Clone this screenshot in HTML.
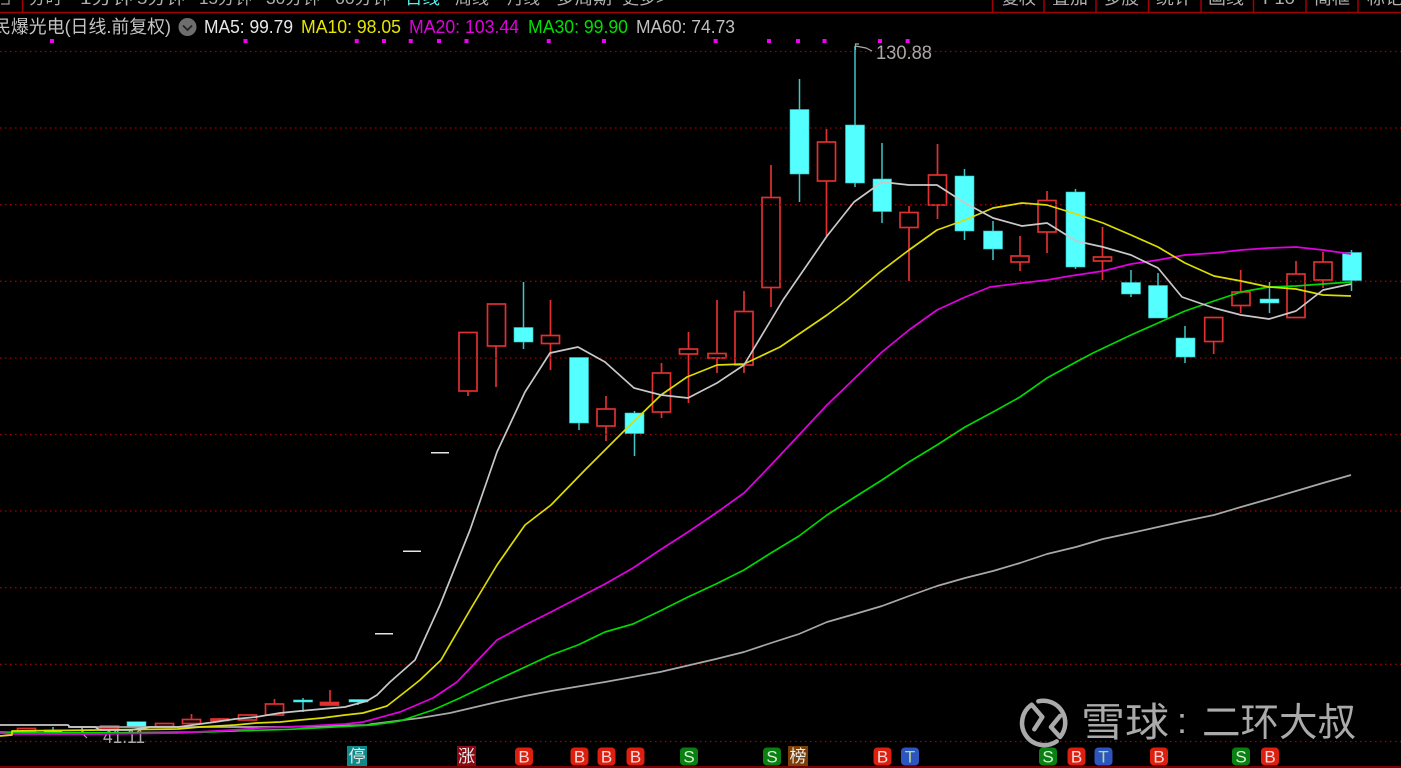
<!DOCTYPE html>
<html><head><meta charset="utf-8"><style>
html,body{margin:0;padding:0;background:#000;width:1401px;height:768px;overflow:hidden}
svg{display:block;position:absolute;left:0;top:0}
text{font-family:"Liberation Sans","Noto Sans CJK SC",sans-serif}
</style></head><body>
<svg width="1401" height="768" viewBox="0 0 1401 768" xmlns="http://www.w3.org/2000/svg">
<rect width="1401" height="768" fill="#000"/>
<!-- top bar -->
<g font-size="17" fill="#b0b0b0">
<text x="29" y="4" textLength="33" lengthAdjust="spacingAndGlyphs">分时</text>
<text x="80" y="4" textLength="53" lengthAdjust="spacingAndGlyphs">1分钟</text>
<text x="137" y="4" textLength="48" lengthAdjust="spacingAndGlyphs">5分钟</text>
<text x="199" y="4" textLength="53" lengthAdjust="spacingAndGlyphs">15分钟</text>
<text x="266" y="4" textLength="54" lengthAdjust="spacingAndGlyphs">30分钟</text>
<text x="335" y="4" textLength="55" lengthAdjust="spacingAndGlyphs">60分钟</text>
<text x="405" y="4" textLength="35" lengthAdjust="spacingAndGlyphs" fill="#55eeee">日线</text>
<text x="455" y="4" textLength="34" lengthAdjust="spacingAndGlyphs">周线</text>
<text x="507" y="4" textLength="33" lengthAdjust="spacingAndGlyphs">月线</text>
<text x="556" y="4" textLength="56" lengthAdjust="spacingAndGlyphs">多周期</text>
<text x="622" y="4" textLength="44" lengthAdjust="spacingAndGlyphs">更多&gt;</text>
<text x="1002" y="4" textLength="34" lengthAdjust="spacingAndGlyphs">复权</text>
<text x="1052" y="4" textLength="36" lengthAdjust="spacingAndGlyphs">叠加</text>
<text x="1104" y="4" textLength="35" lengthAdjust="spacingAndGlyphs">多股</text>
<text x="1156" y="4" textLength="36" lengthAdjust="spacingAndGlyphs">统计</text>
<text x="1208" y="4" textLength="36" lengthAdjust="spacingAndGlyphs">画线</text>
<text x="1263" y="4" textLength="32" lengthAdjust="spacingAndGlyphs">F10</text>
<text x="1314" y="4" textLength="36" lengthAdjust="spacingAndGlyphs">简框</text>
<text x="1367" y="4" textLength="36" lengthAdjust="spacingAndGlyphs">标记</text>
</g>
<path d="M1 4H9V0" fill="none" stroke="#999" stroke-width="1.3"/>
<path d="M0 12.500H1401M22.500 0V12M992.500 0V12M1044 0V12M1096 0V12M1148.500 0V12M1201 0V12M1253.500 0V12M1306 0V12M1358 0V12M0 767H1401" stroke="#a00000" stroke-width="1.5" fill="none"/>
<!-- header -->
<text x="-7" y="33" font-size="18" fill="#c4c4c4" textLength="178" lengthAdjust="spacingAndGlyphs">民爆光电(日线.前复权)</text>
<circle cx="187.500" cy="27" r="9" fill="#6e6e6e"/>
<path d="M183 25.500L187.500 30L192 25.500" fill="none" stroke="#222" stroke-width="1.8"/>
<g font-size="18">
<text x="204" y="33" fill="#e8e8e8" textLength="89" lengthAdjust="spacingAndGlyphs">MA5: 99.79</text>
<text x="301" y="33" fill="#e6e600" textLength="100" lengthAdjust="spacingAndGlyphs">MA10: 98.05</text>
<text x="409" y="33" fill="#e000e0" textLength="110" lengthAdjust="spacingAndGlyphs">MA20: 103.44</text>
<text x="528" y="33" fill="#00e000" textLength="100" lengthAdjust="spacingAndGlyphs">MA30: 99.90</text>
<text x="636" y="33" fill="#c0c0c0" textLength="99" lengthAdjust="spacingAndGlyphs">MA60: 74.73</text>
</g>
<!-- magenta dots -->
<path d="M50 39h4v4h-4zM243.500 39h4v4h-4zM354.700 39h4v4h-4zM382 39h4v4h-4zM408.700 39h4v4h-4zM437 39h4v4h-4zM464.500 39h4v4h-4zM546.700 39h4v4h-4zM602 39h4v4h-4zM713.600 39h4v4h-4zM767 39h4v4h-4zM796 39h4v4h-4zM822.500 39h4v4h-4zM878 39h4v4h-4zM905.600 39h4v4h-4z" fill="#f000f0"/>
<!-- red candles -->
<g stroke="#e03030" stroke-width="1.700" fill="none">
<path d="M468 391V396M496 346V387M550.500 300V370M606 396V441M661.500 363V418M688.500 332V403M717 300V373M744 291V373M771 165V307M826.500 129V236M909 206V281M937.500 144V219M1020 236V271M1047 191V253M1102.500 227V280M1213.700 342V354M1240.700 270V313M1296 261V274M1323 252V288M191.500 714V719M274.500 699V704M330 690V703M219.500 718V722"/>
<path d="M26 728V731" />
<g fill="#000">
<rect x="459" y="332.500" width="18" height="58.500"/>
<rect x="487.500" y="304" width="18" height="42"/>
<rect x="541.500" y="335.500" width="18" height="8"/>
<rect x="597" y="409" width="18" height="17"/>
<rect x="652.500" y="373" width="18" height="39"/>
<rect x="679.500" y="349" width="18" height="5"/>
<rect x="708" y="353.500" width="18" height="4.500"/>
<rect x="735" y="311.500" width="18" height="53.500"/>
<rect x="762" y="197.500" width="18" height="90"/>
<rect x="817.500" y="142" width="18" height="39"/>
<rect x="900" y="212.500" width="18" height="15"/>
<rect x="928.500" y="175" width="18" height="30"/>
<rect x="1011" y="256" width="18" height="6"/>
<rect x="1038" y="200.500" width="18" height="31.500"/>
<rect x="1093.500" y="257" width="18" height="4"/>
<rect x="1204.700" y="317.500" width="18" height="24"/>
<rect x="1232" y="292" width="18" height="13.500"/>
<rect x="1287" y="274" width="18" height="43.500"/>
<rect x="1314" y="262" width="18" height="18"/>
<rect x="17.500" y="728.500" width="18" height="3"/>
<rect x="100.500" y="726" width="18" height="3"/>
<rect x="155.500" y="723.500" width="18" height="3"/>
<rect x="182.500" y="719.500" width="18" height="4"/>
<rect x="211" y="719" width="17.500" height="1.500"/>
<rect x="238.500" y="715" width="18" height="5"/>
<rect x="265.500" y="704" width="18" height="11"/>
</g>
<rect x="320.500" y="702.500" width="18" height="2.500" fill="#e83030"/>
</g>
<!-- grid -->
<path d="M0 51.500H1401M0 128H1401M0 204.700H1401M0 281.300H1401M0 358H1401M0 434.500H1401M0 511H1401M0 587.700H1401M0 664.300H1401M0 741.500H1401" stroke="#a00000" stroke-width="1.300" stroke-dasharray="1.500 3.500" fill="none"/>
<!-- cyan candles -->
<path d="M523.500 282V349M579 423V430M634.500 411V456M799.500 79V202M855 46V187M882 143V223M964.500 169V240M993 221V260M1075.500 189V269M1131 270V297M1158 273V286M1185 326V363M1269.500 282V313M1351.500 250V291M53 727V731M303 698V712M358 702V705M82 728V735" stroke="#3fc6c6" stroke-width="1.500" fill="none"/>
<g fill="#54ffff" stroke="#36c0c0" stroke-width=".6">
<rect x="514" y="327.500" width="19" height="14.500"/>
<rect x="569.500" y="357.500" width="19" height="65.500"/>
<rect x="625" y="413" width="19" height="20.500"/>
<rect x="790" y="109.500" width="19" height="64.500"/>
<rect x="845.500" y="125" width="19" height="58"/>
<rect x="873" y="179" width="18.500" height="32.500"/>
<rect x="955" y="176" width="19" height="55"/>
<rect x="983.500" y="231" width="19" height="18"/>
<rect x="1066" y="192" width="19" height="75"/>
<rect x="1121.500" y="282.500" width="19" height="11.500"/>
<rect x="1148.500" y="285.500" width="19" height="32.500"/>
<rect x="1176" y="338" width="19" height="19"/>
<rect x="1260" y="299" width="19" height="4"/>
<rect x="1342.500" y="252.500" width="19" height="28"/>
<rect x="44" y="730" width="18" height="2"/>
<rect x="127" y="721.700" width="19" height="5.300"/>
<rect x="293.500" y="700" width="19" height="2"/>
<rect x="349" y="699.500" width="19" height="2.500"/>
</g>
<!-- limit up dashes -->
<path d="M375 633.800H393M403 551.300H421M431 452.800H449" stroke="#e4e4e4" stroke-width="1.500"/>
<!-- labels -->
<text x="103" y="743" font-size="20" fill="#a8a8a8" textLength="42" lengthAdjust="spacingAndGlyphs">41.11</text>
<path d="M82 728L84 735L87 738" fill="none" stroke="#a8a8a8" stroke-width="1.200"/>
<text x="876" y="59" font-size="19" fill="#a8a8a8" textLength="56" lengthAdjust="spacingAndGlyphs">130.88</text>
<path d="M855.500 50V44H859M855.500 46L866 48L872 51" fill="none" stroke="#a8a8a8" stroke-width="1.200"/>
<!-- MAs -->
<g fill="none" stroke-width="1.700" stroke-linejoin="round">
<polyline stroke="#a8a8a8" points="68,727 285,727 367,725 372,724 420,718 450,713 497,702 525,696 551,691 605,682 660,672 716,659 744,652 771,643 799,634 827,622 855,614 882,606 909,596 937,586 965,578 993,571 1020,563 1047,554 1076,547 1103,539 1131,533 1158,527 1185,521 1214,515 1241,507 1269,499 1296,491 1323,483 1351,475"/>
<polyline stroke="#00d800" points="0,732 40,733 68,732.700 122,732.700 205,732 290,729.300 315,728 362,725.500 372,725 400,721 433,710 460,698 497,680 551,655 578,645 605,632 633,624 660,611 688,597 716,584 744,570 771,553 799,536 827,515 855,497 882,480 909,462 937,445 965,427 993,412 1020,397 1047,378 1076,362 1093,353 1131,335 1158,323 1185,311 1214,301 1241,292 1269,287 1296,286 1323,284 1351,282"/>
<polyline stroke="#e000e0" points="0,733 12,734 100,734 178,733 233,730 260,728 288,727 345,724 363,722 400,712 433,698 457,682 497,640 525,625 551,612 578,598 605,584 633,568 660,550 688,532 716,513 744,493 771,465 799,435 827,405 855,378 882,352 909,330 937,310 963,298 990,287 1022,283 1047,280 1070,276 1103,271 1131,264 1158,260 1185,255 1214,253 1241,250 1269,248 1296,247 1323,250 1351,254"/>
<polyline stroke="#dcdc00" points="0,736 12,735 12,731 100,730 178,729 200,727 235,725 256,723 280,722 300,720 322,718 345,715 363,713 387,706 410,688 420,680 441,660 470,610 497,565 525,525 551,505 585,470 598,457 625,430 661,395 687,377 717,365 744,364 780,347 827,315 847,300 880,272 909,250 937,230 965,220 993,208 1022,203 1047,205 1076,214 1103,223 1131,235 1158,247 1185,263 1214,276 1241,281 1269,287 1296,289 1323,295 1351,296"/>
<polyline stroke="#c8c8c8" points="0,725 68,725 70,727 95,727 100,730 130,730 150,727 178,727 200,724 215,722 235,719 256,717 280,713 300,711 322,709 345,707 367,701 377,695 390,682 415,660 440,605 470,530 497,452 525,392 550,353 578,347 605,362 634,388 661,395 688,398 717,383 744,365 783,300 827,236 854,202 882,182 909,185 937,185 965,203 993,218 1022,226 1047,223 1060,231 1076,241 1103,247 1131,255 1158,268 1182,297 1214,308 1241,315 1269,319 1296,311 1323,290 1351,284"/>
</g>
<!-- watermark -->
<g fill="none" stroke="#aaa" stroke-width="4.500" stroke-linecap="round" stroke-linejoin="round">
<path d="M1034.300 729.300L1042.300 717L1031.700 704.700A22 22 0 0 0 1056.700 741.300"/>
<path d="M1038.300 701.300A22 22 0 0 1 1060 737L1051 727L1060 716"/>
</g>
<g fill="#aaa">
<text x="1081" y="736" font-size="40" textLength="88" lengthAdjust="spacingAndGlyphs">雪球</text>
<text x="1177" y="733" font-size="36">:</text>
<text x="1202" y="736" font-size="39" textLength="154" lengthAdjust="spacingAndGlyphs">二环大叔</text>
</g>
<!-- badges -->
<g font-size="17" text-anchor="middle">
<rect x="347" y="746" width="20" height="20" fill="#0e8a8a"/><text x="357" y="762" fill="#e8e8e8" font-size="17">停</text>
<rect x="457" y="746" width="19" height="20" fill="#8a0a14"/><text x="466.500" y="762" fill="#eee" font-size="17">涨</text>
<rect x="788" y="746" width="20" height="20" fill="#7c3f08"/><text x="798" y="762" fill="#eee" font-size="17">榜</text>
<g fill="#dd1f0f">
<rect x="515" y="747.500" width="18" height="18" rx="4"/><rect x="570.500" y="747.500" width="18" height="18" rx="4"/><rect x="597.500" y="747.500" width="18" height="18" rx="4"/><rect x="626.500" y="747.500" width="18" height="18" rx="4"/><rect x="873.500" y="747.500" width="18" height="18" rx="4"/><rect x="1067.500" y="747.500" width="18" height="18" rx="4"/><rect x="1150" y="747.500" width="18" height="18" rx="4"/><rect x="1261" y="747.500" width="18" height="18" rx="4"/>
</g>
<g fill="#0b8012">
<rect x="680" y="747.500" width="18" height="18" rx="4"/><rect x="763" y="747.500" width="18" height="18" rx="4"/><rect x="1039" y="747.500" width="18" height="18" rx="4"/><rect x="1232" y="747.500" width="18" height="18" rx="4"/>
</g>
<g fill="#2d55c0">
<rect x="901" y="747.500" width="18" height="18" rx="4"/><rect x="1094.500" y="747.500" width="18" height="18" rx="4"/>
</g>
<g fill="#f4dcdc">
<text x="524" y="762.500">B</text><text x="579.500" y="762.500">B</text><text x="606.500" y="762.500">B</text><text x="635.500" y="762.500">B</text><text x="882.500" y="762.500">B</text><text x="1076.500" y="762.500">B</text><text x="1159" y="762.500">B</text><text x="1270" y="762.500">B</text>
</g>
<g fill="#d8f0d8">
<text x="689" y="762.500">S</text><text x="772" y="762.500">S</text><text x="1048" y="762.500">S</text><text x="1241" y="762.500">S</text>
</g>
<g fill="#b8d890">
<text x="910" y="762.500">T</text><text x="1103.500" y="762.500">T</text>
</g>
</g>
</svg>
</body></html>
